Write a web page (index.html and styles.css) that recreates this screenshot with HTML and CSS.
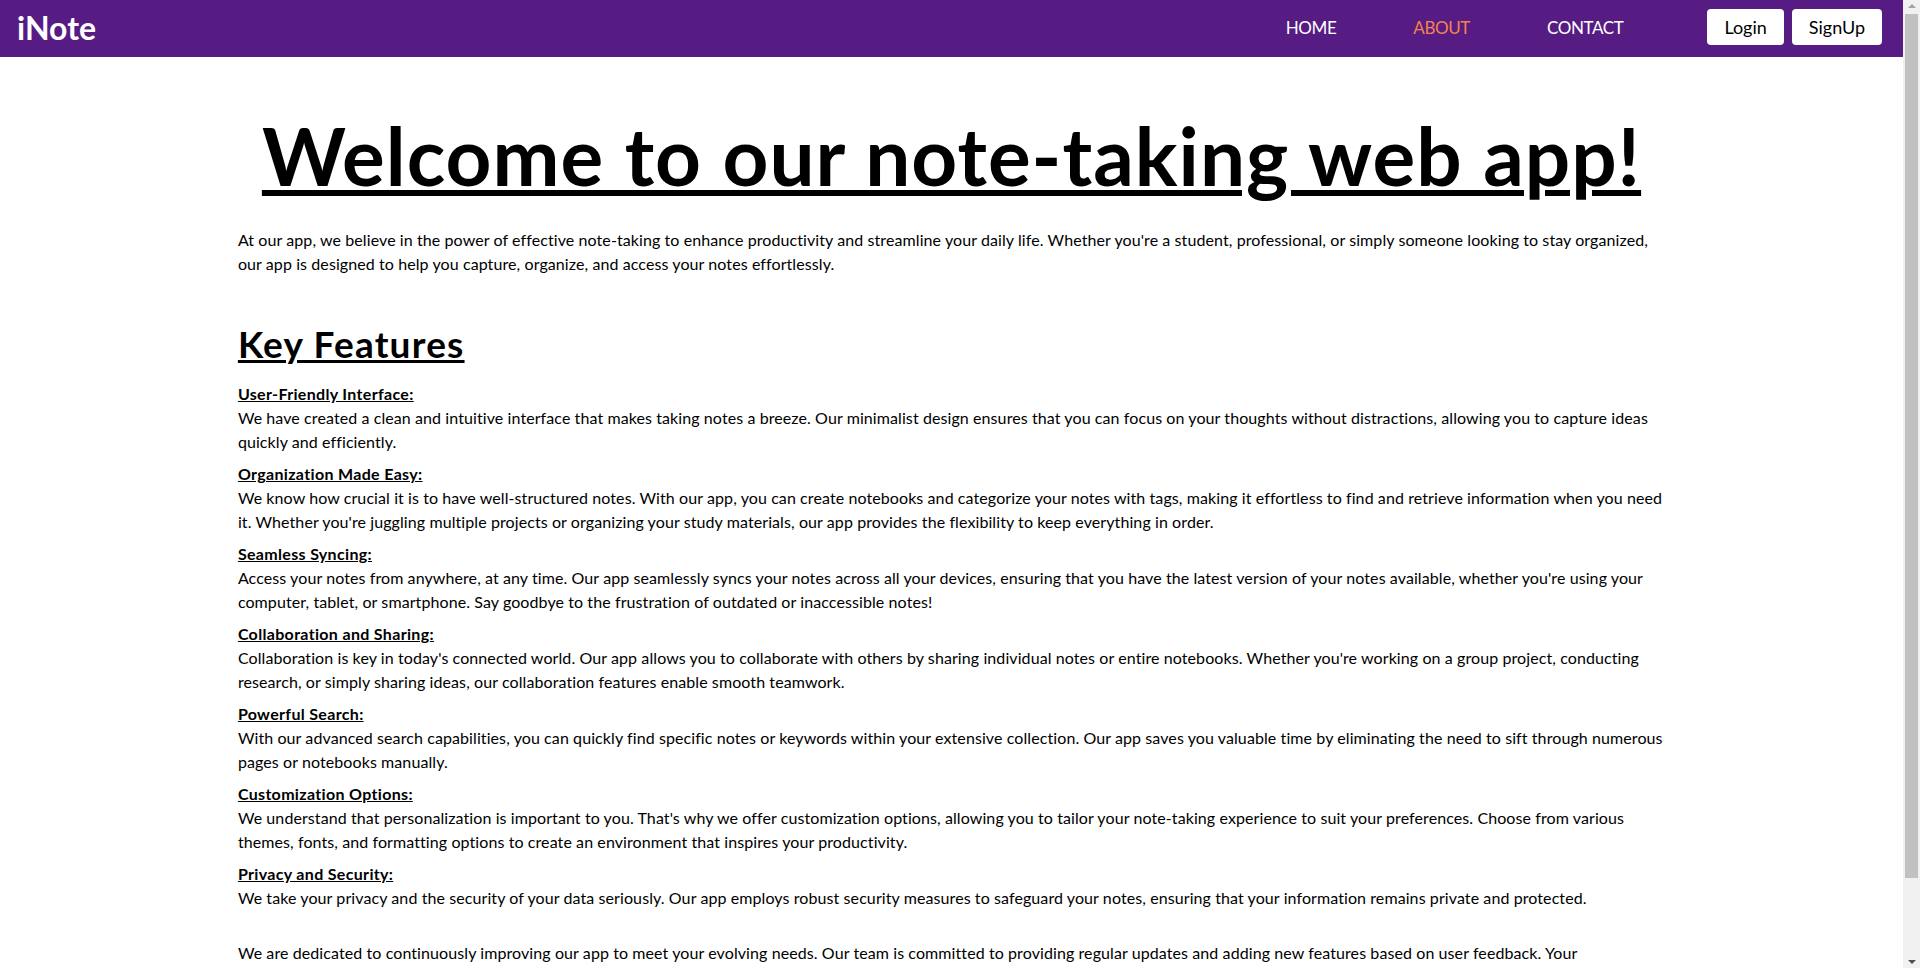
FILE: index.html
```html
<!DOCTYPE html>
<html lang="en">
<head>
<meta charset="utf-8">
<title>iNote - About</title>
<link rel="stylesheet" href="styles.css">
</head>
<body>
<nav class="navbar">
  <a class="brand" href="#">iNote</a>
  <div class="nav-right">
    <ul class="nav-links">
      <li><a href="#">HOME</a></li>
      <li><a class="active" href="#">ABOUT</a></li>
      <li><a href="#">CONTACT</a></li>
    </ul>
    <div class="auth">
      <button class="btn">Login</button>
      <button class="btn">SignUp</button>
    </div>
  </div>
</nav>
<main class="about">
  <h1 class="title">Welcome to our note-taking web app!</h1>
  <p class="intro">At our app, we believe in the power of effective note-taking to enhance productivity and streamline your daily life. Whether you're a student, professional, or simply someone looking to stay organized, our app is designed to help you capture, organize, and access your notes effortlessly.</p>
  <h2 class="section-title">Key Features</h2>
  <div class="features">
    <div class="feature">
      <strong class="feature-title">User-Friendly Interface:</strong>
      <p>We have created a clean and intuitive interface that makes taking notes a breeze. Our minimalist design ensures that you can focus on your thoughts without distractions, allowing you to capture ideas quickly and efficiently.</p>
    </div>
    <div class="feature">
      <strong class="feature-title">Organization Made Easy:</strong>
      <p>We know how crucial it is to have well-structured notes. With our app, you can create notebooks and categorize your notes with tags, making it effortless to find and retrieve information when you need it. Whether you're juggling multiple projects or organizing your study materials, our app provides the flexibility to keep everything in order.</p>
    </div>
    <div class="feature">
      <strong class="feature-title">Seamless Syncing:</strong>
      <p>Access your notes from anywhere, at any time. Our app seamlessly syncs your notes across all your devices, ensuring that you have the latest version of your notes available, whether you're using your computer, tablet, or smartphone. Say goodbye to the frustration of outdated or inaccessible notes!</p>
    </div>
    <div class="feature">
      <strong class="feature-title">Collaboration and Sharing:</strong>
      <p>Collaboration is key in today's connected world. Our app allows you to collaborate with others by sharing individual notes or entire notebooks. Whether you're working on a group project, conducting research, or simply sharing ideas, our collaboration features enable smooth teamwork.</p>
    </div>
    <div class="feature">
      <strong class="feature-title">Powerful Search:</strong>
      <p>With our advanced search capabilities, you can quickly find specific notes or keywords within your extensive collection. Our app saves you valuable time by eliminating the need to sift through numerous pages or notebooks manually.</p>
    </div>
    <div class="feature">
      <strong class="feature-title">Customization Options:</strong>
      <p>We understand that personalization is important to you. That's why we offer customization options, allowing you to tailor your note-taking experience to suit your preferences. Choose from various themes, fonts, and formatting options to create an environment that inspires your productivity.</p>
    </div>
    <div class="feature">
      <strong class="feature-title">Privacy and Security:</strong>
      <p>We take your privacy and the security of your data seriously. Our app employs robust security measures to safeguard your notes, ensuring that your information remains private and protected.</p>
    </div>
  </div>
  <p class="outro">We are dedicated to continuously improving our app to meet your evolving needs. Our team is committed to providing regular updates and adding new features based on user feedback. Your recommendations and suggestions help us shape the future of our app, so please keep them coming.</p>
</main>
<div class="scrollbar" aria-hidden="true">
  <div class="sb-btn sb-up"></div>
  <div class="sb-thumb"></div>
  <div class="sb-track"></div>
  <div class="sb-btn sb-down"></div>
</div>
</body>
</html>
```
FILE: styles.css
```css
* {
  box-sizing: border-box;
}

body {
  margin: 0;
  padding-right: 17px;
  font-family: Lato, "Liberation Sans", sans-serif;
  color: #000;
  background: #fff;
}

/* window scrollbar as it appears in the screenshot */
.scrollbar {
  position: fixed;
  top: 0;
  right: 0;
  width: 17px;
  height: 100vh;
  background: #f1f1f1;
  display: flex;
  flex-direction: column;
}

.sb-btn {
  height: 14px;
  display: flex;
  justify-content: center;
  flex: none;
}

.sb-up {
  align-items: flex-start;
  padding-top: 4px;
}

.sb-up::before {
  content: "";
  border-left: 4px solid transparent;
  border-right: 4px solid transparent;
  border-bottom: 4px solid #a3a3a3;
}

.sb-down {
  align-items: flex-end;
  padding-bottom: 4px;
}

.sb-down::before {
  content: "";
  border-left: 4px solid transparent;
  border-right: 4px solid transparent;
  border-top: 4px solid #505050;
}

.sb-thumb {
  height: 864px;
  margin: 0 2px;
  background: #c1c1c1;
  flex: none;
}

.sb-track {
  flex: 1;
}

.navbar {
  height: 57px;
  background: #561c83;
  display: flex;
  align-items: center;
  justify-content: space-between;
  padding: 0 21px 3px 17px;
}

.brand {
  color: #fff;
  text-decoration: none;
  font-size: 32px;
  font-weight: 700;
}

.nav-right {
  display: flex;
  align-items: center;
}

.nav-links {
  display: flex;
  list-style: none;
  margin: 0 84px 0 0;
  padding: 0;
  gap: 77px;
}

.nav-links a {
  color: #fff;
  text-decoration: none;
  font-size: 17px;
  letter-spacing: -0.4px;
}

.nav-links a.active {
  color: #f3834f;
}

.auth {
  display: flex;
  gap: 8px;
}

.btn {
  height: 36px;
  padding: 0 17px;
  border: none;
  border-radius: 4px;
  background: #fff;
  color: #000;
  font-family: inherit;
  font-size: 18px;
}

.about {
  width: 75%;
  margin: 0 auto;
  padding-bottom: 59px;
  font-size: 16px;
  line-height: 24px;
  letter-spacing: 0.09px;
}

.title {
  margin: 50px 0 25px;
  text-align: center;
  font-size: 80px;
  line-height: 96px;
  font-weight: 700;
  letter-spacing: 1px;
  text-decoration: underline;
  text-decoration-thickness: 6px;
  text-underline-offset: 4px;
}

.intro {
  margin: 0;
}

.section-title {
  margin: 46px 0 17px;
  font-size: 37px;
  line-height: 43px;
  font-weight: 700;
  letter-spacing: 1.2px;
  text-decoration: underline;
  text-decoration-thickness: 3px;
}

.feature {
  margin-bottom: 8px;
}

.feature-title {
  display: block;
  letter-spacing: 0.33px;
  text-decoration: underline;
}

.feature p {
  margin: 0;
}

.outro {
  margin: 31px 0 0;
}
```
